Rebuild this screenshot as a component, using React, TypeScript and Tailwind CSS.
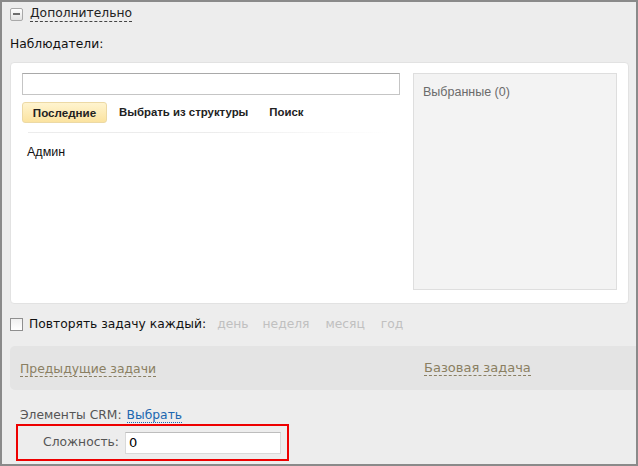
import React from "react";

const tah = { fontFamily: '"DejaVu Sans", Verdana, sans-serif' } as React.CSSProperties;

export default function App() {
  return (
    <div className="w-[638px] h-[466px] bg-[#ededed] border-2 border-[#8a8a8a] box-border overflow-hidden relative" style={{ fontFamily: '"Liberation Sans", Arial, sans-serif' }}>
      {/* header */}
      <div className="flex items-center pl-[8px] mt-[5px] h-[14px]">
        <div className="w-[13px] h-[13px] border border-[#a9a9a9] rounded-[2px] bg-gradient-to-b from-white to-[#e2e2e2] flex items-center justify-center">
          <div className="w-[7px] h-[2px] bg-[#6e6e6e]" />
        </div>
        <span className="ml-[7px] text-[12.3px] text-[#222] border-b border-dashed border-[#444] leading-[15px]" style={tah}>Дополнительно</span>
      </div>

      <div className="pl-[8px] mt-[15px] text-[12.3px] text-[#111] leading-[16px]" style={tah}>Наблюдатели:</div>

      {/* white panel */}
      <div className="ml-[8px] mt-[10px] w-[619px] h-[242px] bg-white rounded-[4px] border border-[#e2e2e2] flex pt-[10px] pl-[11px] box-border">
        <div className="w-[378px] flex flex-col">
          <div className="h-[22px] border border-[#c5c5c5] border-t-[#a9a9a9]" />
          <div className="flex items-center mt-[7px] h-[21px]">
            <div className="h-[21px] w-[85px] rounded-[3px] border border-[#ecd9a5] bg-gradient-to-b from-[#fff4cf] to-[#fbe3a0] flex items-center justify-center text-[11.6px] font-bold text-[#222]">Последние</div>
            <div className="ml-[12px] text-[11.4px] font-bold text-[#222]">Выбрать из структуры</div>
            <div className="ml-[21px] text-[11.4px] font-bold text-[#222]">Поиск</div>
          </div>
          <div className="mt-[9px] ml-[6px] w-[362px] h-px bg-gradient-to-r from-[#ececec] via-[#ececec] to-transparent" />
          <div className="mt-[12px] ml-[5px] text-[12.5px] leading-[15px] text-[#111]">Админ</div>
        </div>
        <div className="ml-[13px] w-[204px] h-[217px] bg-[#f3f3f3] border border-[#dedede] pl-[9px] pt-[9px] text-[12.5px] text-[#6b6b6b]">Выбранные (0)</div>
      </div>

      {/* repeat */}
      <div className="flex items-center pl-[8px] mt-[11px] h-[18px]">
        <div className="w-[13px] h-[13px] border border-[#8f8f8f] bg-gradient-to-b from-[#f0f0f0] to-white" />
        <span className="ml-[6px] text-[12.3px] text-[#111]" style={tah}>Повторять задачу каждый:</span>
        <span className="ml-[11px] text-[12.3px] text-[#c0c0c0]" style={tah}>день</span>
        <span className="ml-[14px] text-[12.3px] text-[#c0c0c0]" style={tah}>неделя</span>
        <span className="ml-[16px] text-[12.3px] text-[#c0c0c0]" style={tah}>месяц</span>
        <span className="ml-[16px] text-[12.3px] text-[#c0c0c0]" style={tah}>год</span>
      </div>

      {/* gray bar */}
      <div className="ml-[8px] mt-[13px] h-[44px] bg-[#e4e4e4] rounded-l-[5px] flex items-center pl-[10px]">
        <span className="w-[404px]">
          <span className="text-[12.4px] text-[#8a7f62] border-b border-dashed border-[#8a7f62] leading-[15px]" style={tah}>Предыдущие задачи</span>
        </span>
        <span className="text-[13px] text-[#8a7f62] border-b border-dashed border-[#8a7f62] leading-[15px]" style={tah}>Базовая задача</span>
      </div>

      {/* CRM */}
      <div className="flex items-center pl-[18px] mt-[17px] h-[16px]">
        <span className="text-[12.3px] text-[#555]" style={tah}>Элементы CRM:</span>
        <span className="ml-[5px] text-[12.3px] text-[#2067b0] border-b border-dotted border-[#2067b0] leading-[14px]" style={tah}>Выбрать</span>
      </div>

      {/* red box */}
      <div className="ml-[14px] mt-[1px] w-[273px] h-[37px] border-2 border-[#ee0000] flex items-center box-border">
        <div className="w-[101px] text-right text-[12.3px] text-[#555]" style={tah}>Сложность:</div>
        <div className="ml-[6px] w-[156px] h-[22px] bg-white border border-[#d9d9d9] border-t-[#bdbdbd] flex items-center pl-[3px] text-[13px] text-black" style={tah}>0</div>
      </div>
    </div>
  );
}
